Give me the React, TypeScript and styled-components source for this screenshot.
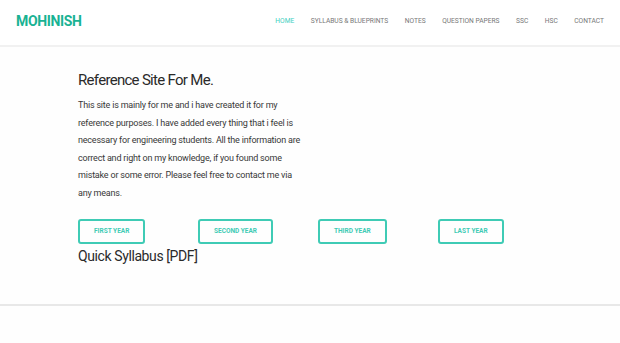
import React from "react";
import styled, { createGlobalStyle } from "styled-components";

const Global = createGlobalStyle`
  html, body { margin: 0; padding: 0; background: #fefefe; }
  body { font-family: Roboto, "Liberation Sans", Arial, sans-serif; }
  * { box-sizing: border-box; }
`;

const Header = styled.header`
  height: 47px;
  display: flex;
  align-items: center;
  justify-content: space-between;
  padding: 0 16px 0 16px;
  background: #fff;
  border-bottom: 2px solid #f1f1f1;
`;

const Logo = styled.div`
  font-size: 14px;
  font-weight: 700;
  color: #19b293;
  letter-spacing: -0.35px;
  margin-top: -3px;
`;

const Nav = styled.nav`
  display: flex;
  gap: 16.5px;
  margin-top: -3px;
`;

const NavItem = styled.a<{ $active?: boolean }>`
  font-size: 6.65px;
  color: ${(p) => (p.$active ? "#3ccfbf" : "#777")};
  text-decoration: none;
  text-transform: uppercase;
`;

const Main = styled.main`
  padding: 21px 0 0 78px;
  height: 259px;
  border-bottom: 2px solid #e8e8e8;
`;

const Title = styled.h1`
  margin: 0;
  font-size: 15px;
  font-weight: 400;
  letter-spacing: -0.7px;
  color: #2a2a2a;
  line-height: 24px;
`;

const Text = styled.p`
  margin: 5px 0 0;
  width: 226px;
  font-size: 9px;
  letter-spacing: -0.2px;
  line-height: 17.6px;
  color: #383838;
`;

const Buttons = styled.div`
  display: grid;
  grid-template-columns: repeat(4, 120px);
  margin-top: 16px;
`;

const YearButton = styled.a`
  justify-self: start;
  height: 25px;
  padding: 0 14px;
  display: flex;
  align-items: center;
  border: 2px solid #3fcbb5;
  border-radius: 3px;
  font-size: 6.5px;
  font-weight: 700;
  color: #3fcbb5;
  text-transform: uppercase;
  text-decoration: none;
`;

const Subtitle = styled.h2`
  margin: 1px 0 0;
  font-size: 14px;
  font-weight: 400;
  letter-spacing: -0.4px;
  color: #2a2a2a;
  line-height: 22px;
`;

const navItems = ["Home", "Syllabus & Blueprints", "Notes", "Question Papers", "SSC", "HSC", "Contact"];
const years = ["First Year", "Second Year", "Third Year", "Last Year"];

export default function App() {
  return (
    <>
      <Global />
      <Header>
        <Logo>MOHINISH</Logo>
        <Nav>
          {navItems.map((n, i) => (
            <NavItem key={n} $active={i === 0}>{n}</NavItem>
          ))}
        </Nav>
      </Header>
      <Main>
        <Title>Reference Site For Me.</Title>
        <Text>
          This site is mainly for me and i have created it for my reference purposes. I have added every
          thing that i feel is necessary for engineering students. All the information are correct and
          right on my knowledge, if you found some mistake or some error. Please feel free to contact me
          via any means.
        </Text>
        <Buttons>
          {years.map((y) => (
            <YearButton key={y}>{y}</YearButton>
          ))}
        </Buttons>
        <Subtitle>Quick Syllabus [PDF]</Subtitle>
      </Main>
    </>
  );
}
